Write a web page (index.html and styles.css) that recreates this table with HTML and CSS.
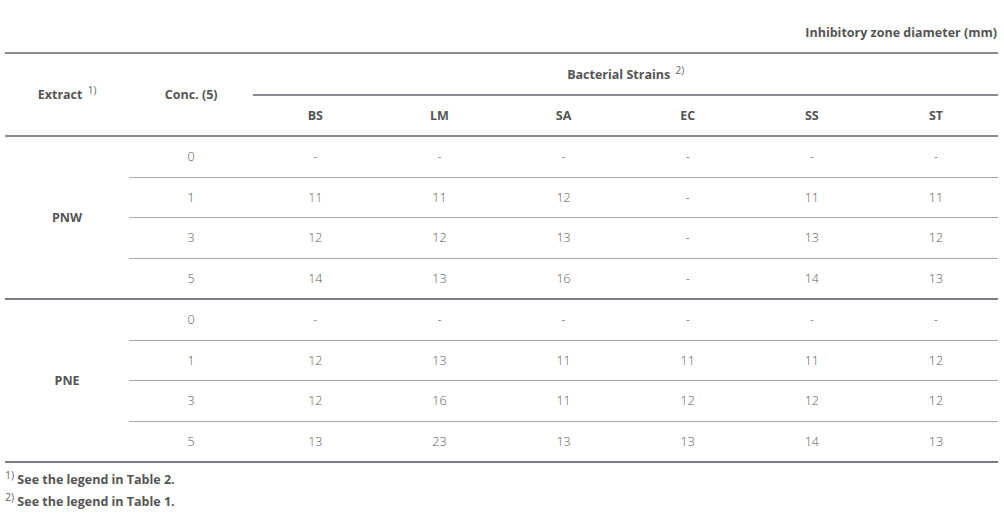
FILE: index.html
```html
<!DOCTYPE html>
<html>
<head>
<meta charset="utf-8">
<link rel="stylesheet" href="styles.css">
</head>
<body>
<div class="wrap">
  <div class="unit">Inhibitory zone diameter (mm)</div>
  <table class="data">
    <colgroup>
      <col class="c"><col class="c"><col class="c"><col class="c"><col class="c"><col class="c"><col class="c"><col class="c">
    </colgroup>
    <thead>
      <tr class="h1">
        <th rowspan="2" class="rs">Extract <sup>1)</sup></th>
        <th rowspan="2" class="rs">Conc. (5)</th>
        <th colspan="6" class="grp">Bacterial Strains <sup>2)</sup></th>
      </tr>
      <tr class="h2">
        <th>BS</th><th>LM</th><th>SA</th><th>EC</th><th>SS</th><th>ST</th>
      </tr>
    </thead>
    <tbody class="g">
      <tr><th rowspan="4" class="ext">PNW</th><td>0</td><td>-</td><td>-</td><td>-</td><td>-</td><td>-</td><td>-</td></tr>
      <tr><td>1</td><td>11</td><td>11</td><td>12</td><td>-</td><td>11</td><td>11</td></tr>
      <tr><td>3</td><td>12</td><td>12</td><td>13</td><td>-</td><td>13</td><td>12</td></tr>
      <tr class="last"><td>5</td><td>14</td><td>13</td><td>16</td><td>-</td><td>14</td><td>13</td></tr>
    </tbody>
    <tbody class="g">
      <tr><th rowspan="4" class="ext">PNE</th><td>0</td><td>-</td><td>-</td><td>-</td><td>-</td><td>-</td><td>-</td></tr>
      <tr><td>1</td><td>12</td><td>13</td><td>11</td><td>11</td><td>11</td><td>12</td></tr>
      <tr><td>3</td><td>12</td><td>16</td><td>11</td><td>12</td><td>12</td><td>12</td></tr>
      <tr class="last"><td>5</td><td>13</td><td>23</td><td>13</td><td>13</td><td>14</td><td>13</td></tr>
    </tbody>
  </table>
  <div class="notes">
    <p><sup>1)</sup> See the legend in Table 2.</p>
    <p><sup>2)</sup> See the legend in Table 1.</p>
  </div>
</div>
</body>
</html>
```

FILE: styles.css
```css
html, body {
  margin: 0;
  padding: 0;
  background: #fff;
}
body {
  font-family: "Open Sans", "Noto Sans", sans-serif;
  color: #555;
  font-size: 12.5px;
}
.wrap {
  padding: 24px 6px 0 5px;
}
.unit {
  text-align: right;
  font-weight: 700;
  color: #555;
  line-height: 18px;
  padding-right: 1px;
  margin-bottom: 10px;
}
.data {
  width: 100%;
  border-collapse: collapse;
  table-layout: fixed;
  border-top: 2px solid #8a8a8f;
  font-size: 12.5px;
}
.data th, .data td {
  padding: 0;
  text-align: center;
  vertical-align: middle;
}
.data thead th {
  font-weight: 700;
  color: #555;
}
.h1 th.grp {
  height: 40px;
  border-bottom: 2px solid #8a8a93;
}
.h2 th {
  height: 39px;
}
thead {
  border-bottom: 2px solid #8a8a8f;
}
sup {
  font-weight: 400;
  font-size: 10px;
  color: #666;
  vertical-align: 5px;
  line-height: 0;
  margin-left: 2px;
}
.data td {
  font-weight: 300;
  color: #5c5c5c;
  height: 39.5px;
  border-bottom: 1px solid #a8a8a8;
}
.data tr.last td {
  border-bottom: none;
}
.data th.ext {
  font-weight: 700;
  color: #555;
}
tbody.g {
  border-bottom: 2px solid #7d7d8a;
}
.notes {
  padding-top: 6px;
}
.notes p {
  margin: 0;
  font-weight: 700;
  color: #555;
  line-height: 22px;
}
.notes sup {
  font-size: 10.5px;
  vertical-align: 5px;
  margin-left: 0;
}
```
